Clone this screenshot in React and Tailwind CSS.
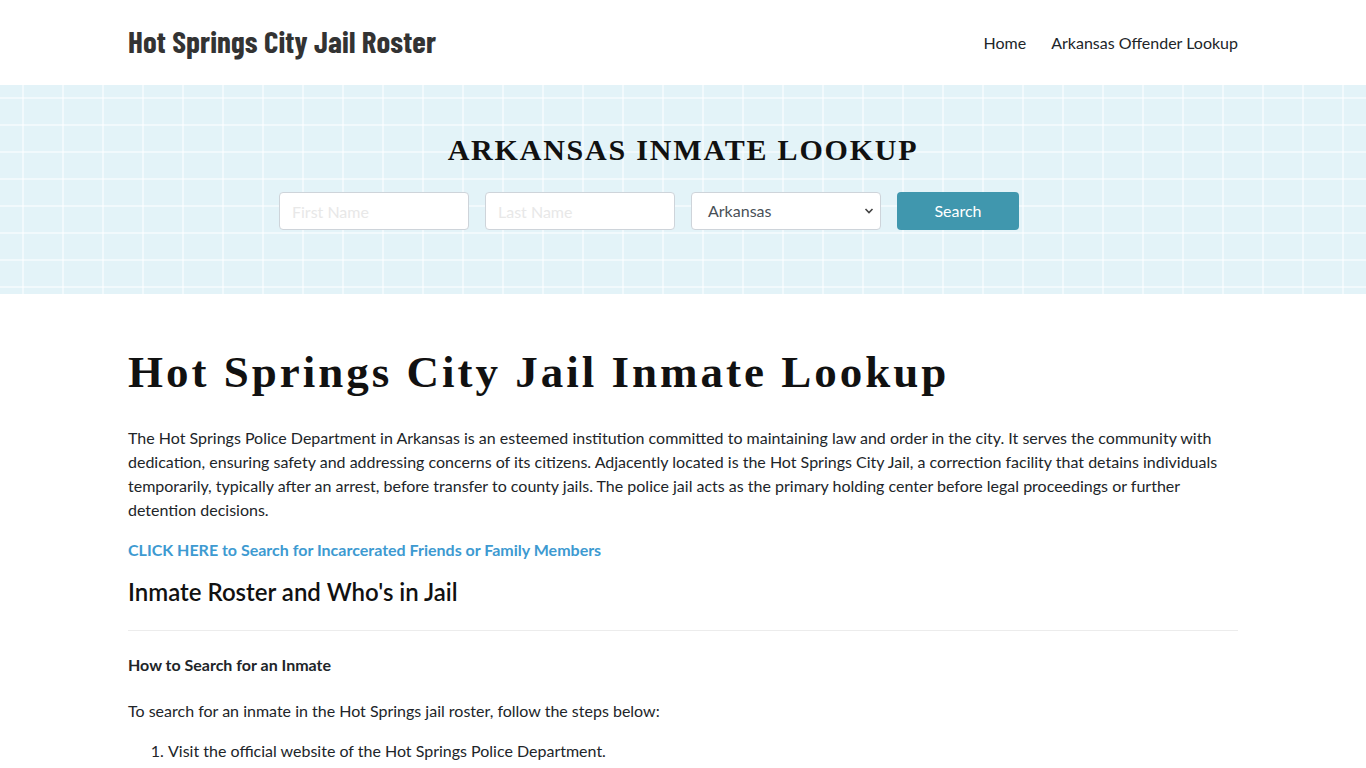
import React from 'react';

const lato = { fontFamily: 'Lato, "Open Sans", sans-serif' };

const App = () => {
    return (
        <div className="min-h-screen bg-white text-[#212529] text-[16px] leading-6" style={lato}>
            <header className="h-[85px]">
                <div className="mx-auto w-[1110px] h-full flex items-center justify-between">
                    <a className="whitespace-nowrap text-[31px] leading-none font-bold tracking-[0.1px] text-[#333] pb-[5px]" style={{ fontFamily: '"Barlow Condensed", Roboto, sans-serif' }}>
                        Hot Springs City Jail Roster
                    </a>
                    <nav className="flex items-center gap-[25px] text-[16px] text-[#212529]">
                        <a>Home</a>
                        <a>Arkansas Offender Lookup</a>
                    </nav>
                </div>
            </header>

            <section className="h-[209px] bg-[#e3f3f8] bg-[linear-gradient(to_right,rgba(255,255,255,0.5)_2px,transparent_2px),linear-gradient(to_bottom,rgba(255,255,255,0.5)_2px,transparent_2px)] bg-[size:40px_27px] bg-[position:22px_12px]">
                <div className="mx-auto w-[1110px] pt-[48px]">
                    <h2 className="text-center text-[30px] leading-[34px] font-bold tracking-[1.8px] text-[#111]" style={{ fontFamily: '"Liberation Serif", "Times New Roman", serif' }}>
                        ARKANSAS INMATE LOOKUP
                    </h2>
                    <form className="mt-[25px] flex gap-4 pl-[151px]">
                        <input className="w-[190px] h-[38px] rounded border border-[#ced4da] bg-white px-3 text-[16px] placeholder:text-[#e8e8e8] outline-none" placeholder="First Name" />
                        <input className="w-[190px] h-[38px] rounded border border-[#ced4da] bg-white px-3 text-[16px] placeholder:text-[#e8e8e8] outline-none" placeholder="Last Name" />
                        <div className="relative w-[190px] h-[38px] rounded border border-[#ced4da] bg-white flex items-center px-4 text-[#495057]">
                            <span>Arkansas</span>
                            <svg className="absolute right-[6px] top-[14px]" width="10" height="8" viewBox="0 0 10 8" fill="none">
                                <path d="M1.5 2L5 5.5L8.5 2" stroke="#444" strokeWidth="1.6" />
                            </svg>
                        </div>
                        <button type="button" className="w-[122px] h-[38px] rounded bg-[#4097ae] text-white text-[16px]">
                            Search
                        </button>
                    </form>
                </div>
            </section>

            <main className="mx-auto w-[1110px] pt-[50px]">
                <h1 className="text-[45px] leading-[56px] font-bold tracking-[3px] text-[#111]" style={{ fontFamily: '"Liberation Serif", Georgia, serif' }}>
                    Hot Springs City Jail Inmate Lookup
                </h1>
                <p className="mt-[26px]">
                    The Hot Springs Police Department in Arkansas is an esteemed institution committed to maintaining law and order in the city. It serves the community with dedication, ensuring safety and addressing concerns of its citizens. Adjacently located is the Hot Springs City Jail, a correction facility that detains individuals temporarily, typically after an arrest, before transfer to county jails. The police jail acts as the primary holding center before legal proceedings or further detention decisions.
                </p>
                <p className="mt-4">
                    <a className="font-bold text-[#3d9ad1]">CLICK HERE to Search for Incarcerated Friends or Family Members</a>
                </p>
                <h2 className="mt-[14px] text-[24px] leading-[32px] font-semibold text-[#111]">Inmate Roster and Who's in Jail</h2>
                <hr className="mt-[22px] border-0 border-t border-[#ececec]" />
                <h3 className="mt-[22px] font-bold">How to Search for an Inmate</h3>
                <p className="mt-[22px]">To search for an inmate in the Hot Springs jail roster, follow the steps below:</p>
                <ol className="mt-4 list-decimal pl-10">
                    <li>Visit the official website of the Hot Springs Police Department.</li>
                </ol>
            </main>
        </div>
    );
};

export default App;
